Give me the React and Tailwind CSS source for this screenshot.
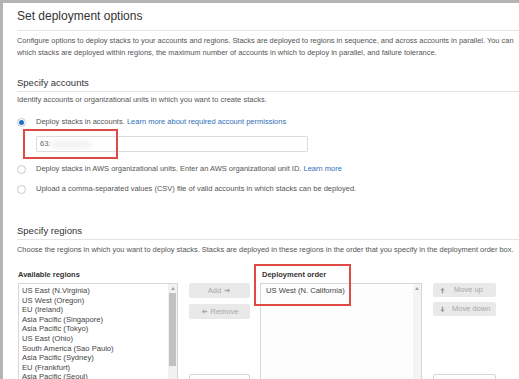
import React from "react";

// Small solid arrow glyphs used on the list buttons
const Arrow = ({ dir = "right", className = "" }) => {
    const rot = { right: 0, left: 180, up: -90, down: 90 }[dir];
    return (
        <svg viewBox="0 0 10 10" className={className} style={{ transform: `rotate(${rot}deg)` }}>
            <path d="M1 4h4.5V1.8L9 5 5.5 8.2V6H1z" fill="currentColor" />
        </svg>
    );
};

const Radio = ({ checked }) => (
    <span className="mr-[10px] shrink-0 w-[9px] h-[9px] rounded-full border border-[#c9c9c9] bg-white flex items-center justify-center">
        {checked && <span className="block w-[5px] h-[5px] rounded-full bg-[#1f6fd1]" />}
    </span>
);

const availableRegions = [
    "US East (N.Virginia)",
    "US West (Oregon)",
    "EU (Ireland)",
    "Asia Pacific (Singapore)",
    "Asia Pacific (Tokyo)",
    "US East (Ohio)",
    "South America (Sao Paulo)",
    "Asia Pacific (Sydney)",
    "EU (Frankfurt)",
    "Asia Pacific (Seoul)",
    "Asia Pacific (Mumbai)",
];

const ListButton = ({ children }) => (
    <div className="h-[15px] rounded-[2px] bg-[#e9e9e9] text-[#a8a8a8] text-[7.5px] flex items-center justify-center gap-[3px]">
        {children}
    </div>
);

const App = () => {
    return (
        <div className="h-[379px] w-[519px] overflow-hidden bg-white border-t-[3px] border-l-[3px] border-[#b4b4b4] font-['Liberation_Sans',Arial,sans-serif] text-[#555]">
            <div className="pl-[14px]">
                {/* Header */}
                <h1 className="pt-[6px] text-[12px] leading-[14px] text-[#333]">Set deployment options</h1>
                <div className="mt-[7px] h-px bg-[#e4e4e4]" />
                <p className="mt-[4px] text-[7.45px] leading-[12px] whitespace-nowrap">
                    Configure options to deploy stacks to your accounts and regions. Stacks are deployed to regions in sequence, and across accounts in parallel. You can
                    <br />
                    which stacks are deployed within regions, the maximum number of accounts in which to deploy in parallel, and failure tolerance.
                </p>

                {/* Specify accounts */}
                <h2 className="mt-[18px] text-[9.5px] leading-[12px] text-[#333]">Specify accounts</h2>
                <div className="mt-[2px] h-px bg-[#e4e4e4]" />
                <p className="mt-[2px] text-[7.5px] leading-[12px] whitespace-nowrap">
                    Identify accounts or organizational units in which you want to create stacks.
                </p>

                <div className="mt-[10px] flex items-center h-[12px] text-[7.5px] whitespace-nowrap">
                    <Radio checked />
                    <span>Deploy stacks in accounts.&nbsp;</span>
                    <span className="text-[#2f6fb7]">Learn more about required account permissions</span>
                </div>
                <div className="relative mt-[8px] ml-[19px] w-[272px] h-[16px] border border-[#dcdcdc] rounded-[1px] flex items-center pl-[3px] text-[7.5px] text-[#666]">
                    <span>63:</span>
                    <span className="ml-[1px] w-[40px] h-[7px] bg-[#f2f2f2] blur-[2px]" />
                    <div className="absolute left-[-14px] top-[-8px] w-[95px] h-[30px] border-2 border-[#e04a45]" />
                </div>
                <div className="mt-[11px] flex items-center h-[12px] text-[7.5px] whitespace-nowrap">
                    <Radio />
                    <span>Deploy stacks in AWS organizational units. Enter an AWS organizational unit ID.&nbsp;</span>
                    <span className="text-[#2f6fb7]">Learn more</span>
                </div>
                <div className="mt-[8px] flex items-center h-[12px] text-[7.5px] whitespace-nowrap">
                    <Radio />
                    <span>Upload a comma-separated values (CSV) file of valid accounts in which stacks can be deployed.</span>
                </div>

                {/* Specify regions */}
                <h2 className="mt-[30px] text-[9.5px] leading-[12px] text-[#333]">Specify regions</h2>
                <div className="mt-[2px] h-px bg-[#e4e4e4]" />
                <p className="mt-[4px] text-[7.45px] leading-[12px] whitespace-nowrap">
                    Choose the regions in which you want to deploy stacks. Stacks are deployed in these regions in the order that you specify in the deployment order box.
                </p>

                <div className="mt-[14px] flex items-start">
                    {/* Available regions */}
                    <div className="ml-[1px] w-[160px]">
                        <div className="text-[7.5px] leading-[10px] font-bold text-[#333]">Available regions</div>
                        <div className="mt-[3px] h-[120px] border border-[#d6d6d6] bg-white flex">
                            <div className="flex-1 pl-[3px] pt-[2px] text-[7.6px] leading-[9.6px] text-[#444] whitespace-nowrap overflow-hidden">
                                {availableRegions.map((r) => (
                                    <div key={r}>{r}</div>
                                ))}
                            </div>
                            <div className="w-[9px] bg-[#f1f1f1] flex flex-col items-center">
                                <span className="mt-[3px] w-0 h-0 border-l-[2px] border-r-[2px] border-b-[3px] border-l-transparent border-r-transparent border-b-[#a3a3a3]" />
                                <div className="mt-[3px] w-[7px] h-[73px] bg-[#c1c1c1]" />
                            </div>
                        </div>
                    </div>

                    {/* Add / Remove */}
                    <div className="ml-[11px] w-[61px] mt-[13px] flex flex-col">
                        <ListButton>
                            <span>Add</span>
                            <Arrow dir="right" className="w-[7px] h-[7px]" />
                        </ListButton>
                        <div className="mt-[6px]">
                            <ListButton>
                                <Arrow dir="left" className="w-[7px] h-[7px]" />
                                <span>Remove</span>
                            </ListButton>
                        </div>
                        <div className="mt-[55px] h-[15px] rounded-[2px] border border-[#d6d6d6] bg-white" />
                    </div>

                    {/* Deployment order */}
                    <div className="relative ml-[10px] w-[162px]">
                        <div className="text-[7.5px] leading-[10px] font-bold text-[#333] pl-[2px]">Deployment order</div>
                        <div className="mt-[3px] h-[120px] border border-[#d6d6d6] bg-[#fdfdfd] flex">
                            <div className="flex-1 pl-[5px] pt-[2px] text-[7.6px] leading-[9.6px] text-[#444] whitespace-nowrap">
                                US West (N. California)
                            </div>
                            <div className="w-[8px] bg-[#f4f4f4] flex flex-col items-center">
                                <span className="mt-[3px] w-0 h-0 border-l-[2px] border-r-[2px] border-b-[3px] border-l-transparent border-r-transparent border-b-[#a3a3a3]" />
                            </div>
                        </div>
                        <div className="absolute left-[-6px] top-[-6px] w-[97px] h-[42px] border-2 border-[#e04a45]" />
                    </div>

                    {/* Move up / down */}
                    <div className="ml-[11px] w-[63px] mt-[13px] flex flex-col">
                        <div className="h-[14px] rounded-[2px] bg-[#e9e9e9] text-[#a8a8a8] text-[7.5px] flex items-center pl-[6px] gap-[8px]">
                            <Arrow dir="up" className="w-[7px] h-[7px] text-[#9a9a9a]" />
                            <span>Move up</span>
                        </div>
                        <div className="mt-[5px] h-[14px] rounded-[2px] bg-[#e9e9e9] text-[#a8a8a8] text-[7.5px] flex items-center pl-[6px] gap-[6px]">
                            <Arrow dir="down" className="w-[7px] h-[7px] text-[#9a9a9a]" />
                            <span>Move down</span>
                        </div>
                        <div className="mt-[58px] h-[15px] rounded-[2px] border border-[#d6d6d6] bg-white" />
                    </div>
                </div>
            </div>
        </div>
    );
};

export default App;
